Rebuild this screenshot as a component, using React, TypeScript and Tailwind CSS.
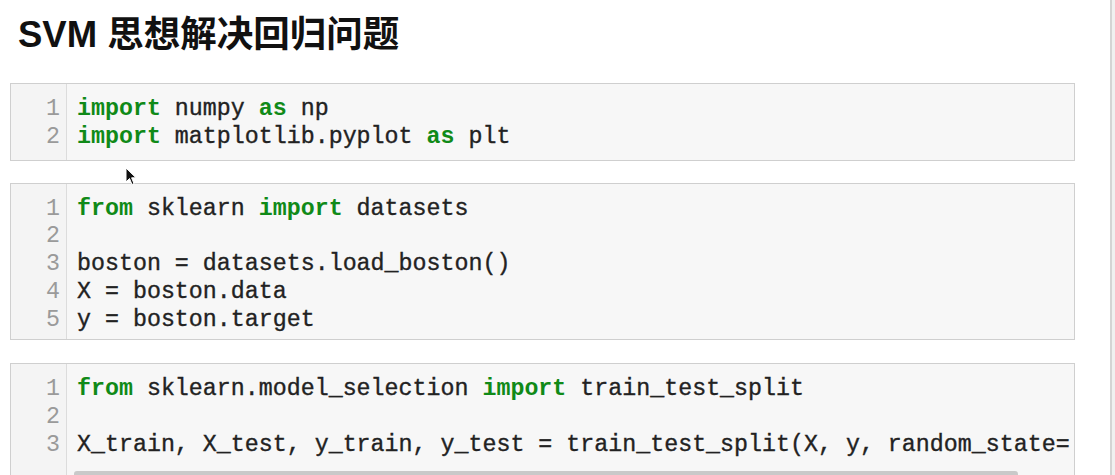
import React from "react";

type Tok = { t: string; k?: boolean };

const K = (t: string): Tok => ({ t, k: true });
const P = (t: string): Tok => ({ t });

const cells: Tok[][][] = [
  [
    [K("import"), P(" numpy "), K("as"), P(" np")],
    [K("import"), P(" matplotlib.pyplot "), K("as"), P(" plt")],
  ],
  [
    [K("from"), P(" sklearn "), K("import"), P(" datasets")],
    [],
    [P("boston = datasets.load_boston()")],
    [P("X = boston.data")],
    [P("y = boston.target")],
  ],
  [
    [K("from"), P(" sklearn.model_selection "), K("import"), P(" train_test_split")],
    [],
    [P("X_train, X_test, y_train, y_test = train_test_split(X, y, random_state=")],
  ],
];

const mono = { fontFamily: '"Liberation Mono", "DejaVu Sans Mono", monospace' };

function Cell({ lines, last, pb }: { lines: Tok[][]; last?: boolean; pb: string }) {
  return (
    <div
      className={`flex w-[1065px] border border-[#cfcfcf] bg-[#f7f7f7] text-[23.3px] leading-[27.75px] ${
        last ? "border-b-0" : ""
      }`}
      style={mono}
    >
      <div className="w-[56px] shrink-0 border-r border-[#dcdcdc] bg-[#f4f4f4] pt-[12px] pr-[6px] text-right text-[#9a9a9a]">
        {lines.map((_, i) => (
          <div key={i}>{i + 1}</div>
        ))}
      </div>
      <div className="min-w-0 flex-1 overflow-hidden pt-[12px] pl-[10px] text-[#222] [-webkit-text-stroke:0.35px_#222]">
        {lines.map((l, i) => (
          <div key={i} className="whitespace-pre">
            {l.length === 0
              ? " "
              : l.map((tk, j) =>
                  tk.k ? (
                    <span key={j} className="font-bold text-[#108a18] [-webkit-text-stroke:0px]">
                      {tk.t}
                    </span>
                  ) : (
                    <span key={j}>{tk.t}</span>
                  )
                )}
          </div>
        ))}
        {last ? (
          <div className="mt-[11px] ml-[-3px] h-[10px] w-[944px] rounded-[3px] bg-[#c9c9c9]" />
        ) : (
          <div className={pb} />
        )}
      </div>
    </div>
  );
}

export default function App() {
  return (
    <div className="relative flex h-[475px] w-[1115px] overflow-hidden bg-white">
      <div className="flex w-[1110px] flex-col pl-[10px]">
        <h1
          className="mt-[17px] ml-[8px] text-[36.5px] font-bold leading-[35px] text-[#111]"
          style={{ fontFamily: '"Liberation Sans", "Noto Sans CJK SC", sans-serif' }}
        >
          SVM 思想解决回归问题
        </h1>
        <div className="mt-[31px] flex flex-col">
          <Cell lines={cells[0]} pb="h-[8px]" />
          <div className="h-[22px]" />
          <Cell lines={cells[1]} pb="h-[5px]" />
          <div className="h-[23px]" />
          <Cell lines={cells[2]} last pb="h-[10px]" />
        </div>
      </div>
      <div className="w-[5px] border-l-2 border-[#d4d4d4] bg-[#f0f0f0]" />
      <svg
        className="absolute left-[125px] top-[167px]"
        width="12"
        height="19"
        viewBox="0 0 12 19"
      >
        <path
          d="M1 1 L1 15 L4.5 11.5 L7 17.5 L9 16.6 L6.6 10.8 L11 10.8 Z"
          fill="#111"
          stroke="#fff"
          strokeWidth="1"
          strokeLinejoin="round"
        />
      </svg>
    </div>
  );
}
